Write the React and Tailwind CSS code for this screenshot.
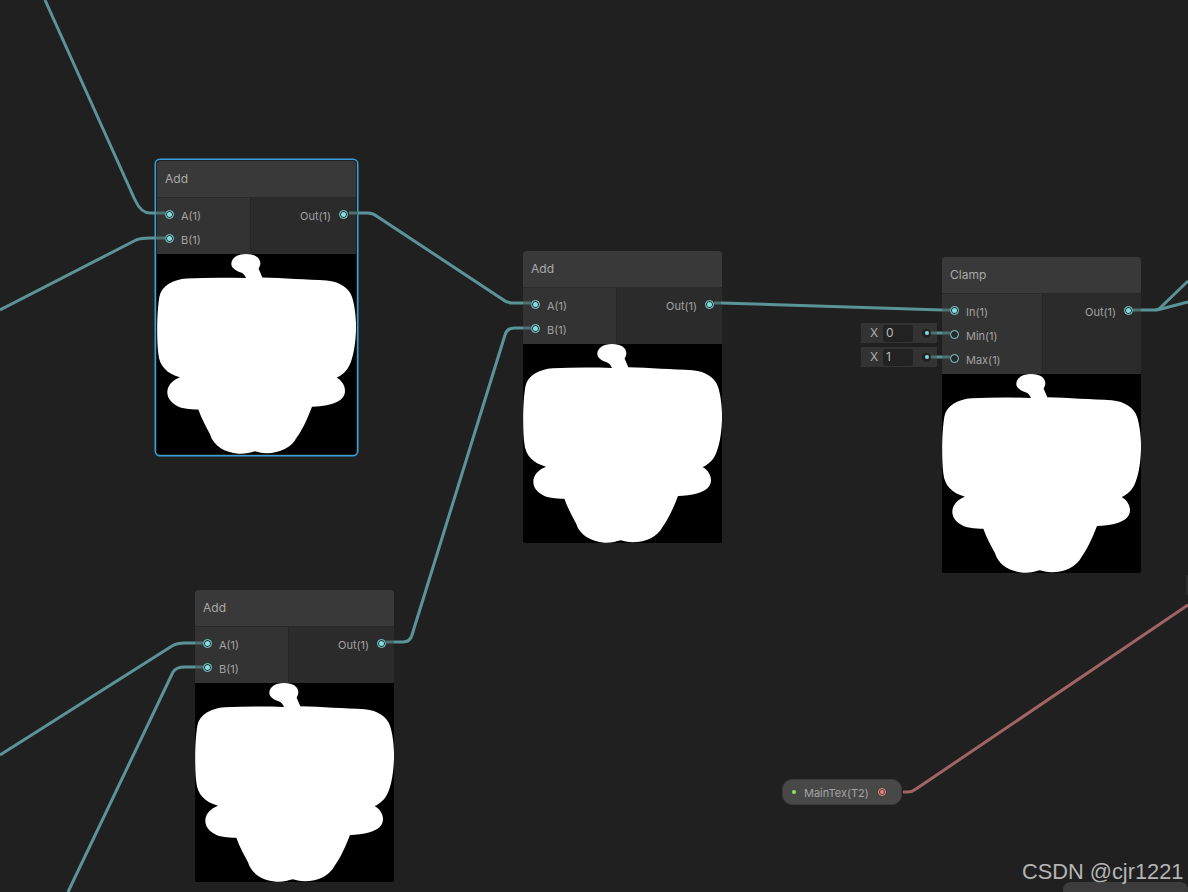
// App.jsx

const font = { fontFamily: 'Inter, "Noto Sans", sans-serif' };

function Silhouette() {
  return (
    <svg viewBox="21 12 597 597" preserveAspectRatio="none" className="block w-full h-full">
      <path
        fill="#fff"
        d="M288 12 C316 12 332 24 331 42 C330 50 326 54 326 56 L337 82 C400 84 470 88 530 91 C570 94 598 115 606 140 C616 170 619 215 618 240 C616 285 610 320 598 345 C590 362 575 375 560 381 C575 390 585 405 585 420 C585 440 570 452 545 460 C525 466 505 468 486 468 C470 510 455 540 440 560 C425 590 390 606 350 607 C335 607 322 603 314 601 C300 605 285 609 265 608 C225 605 190 585 180 550 C170 530 155 505 145 476 C120 476 90 474 75 462 C60 452 52 440 52 425 C52 405 68 388 90 380 C50 370 28 345 25 310 C20 270 20 190 28 140 C35 105 70 88 110 85 C170 82 230 82 288 84 C285 76 280 70 275 68 C255 62 244 52 244 42 C244 24 262 12 288 12 Z"
      />
    </svg>
  );
}

function Dot({ empty }) {
  return (
    <span className="relative z-20 flex items-center justify-center w-[9px] h-[9px] rounded-full border border-[#7fdde0] bg-[#262626] shrink-0">
      {!empty && <span className="w-[5px] h-[5px] rounded-full bg-[#7fdde0]" />}
    </span>
  );
}

function Port({ label, empty, right }) {
  return (
    <div className={`flex items-center h-6 ${right ? 'justify-end gap-[8px]' : 'gap-[7px]'}`}>
      {right ? null : <Dot empty={empty} />}
      <span className="text-[11px] leading-none pt-[4px] text-[#a2a2a2]">{label}</span>
      {right ? <Dot empty={empty} /> : null}
    </div>
  );
}

function Node({ title, inputs, className, leftWidth, bodyHeight }) {
  return (
    <div className={`absolute flex flex-col rounded-[3px] bg-black overflow-hidden ${className}`}>
      <div className="flex items-center h-[37px] pl-[8px] bg-[#393939] border-b border-[#2a2a2a] text-[12px] text-[#aaaaaa] shrink-0">
        {title}
      </div>
      <div className={`flex shrink-0 ${bodyHeight}`}>
        <div className={`bg-[#333333] border-r border-[#262626] pl-[8px] pt-1 ${leftWidth}`}>
          {inputs.map((p) => (
            <Port key={p.label} label={p.label} empty={p.empty} />
          ))}
        </div>
        <div className="flex-1 bg-[#2b2b2b] pr-[8px] pt-1">
          <Port label="Out(1)" right />
        </div>
      </div>
      <div className="flex-1 min-h-0 bg-black">
        <Silhouette />
      </div>
    </div>
  );
}

function ValueField({ value }) {
  return (
    <div className="flex items-center w-[76px] h-5 bg-[#333333] text-[12px] text-[#aaaaaa]">
      <span className="w-[22px] pl-[9px]">X</span>
      <span className="flex items-center w-[30px] h-[17px] pl-[3px] rounded-[3px] bg-[#222222] text-[#bbbbbb]">{value}</span>
      <span className="relative z-20 ml-[9px] flex items-center justify-center w-[9px] h-[9px] rounded-full bg-[#222222]">
        <span className="w-[4px] h-[4px] rounded-full bg-[#7fdde0]" />
      </span>
    </div>
  );
}

function Wires() {
  return (
    <svg width="1188" height="892" className="absolute left-0 top-0 z-10 pointer-events-none" fill="none">
      <g stroke="#5b9498" strokeWidth="3">
        <path d="M45 0 L135 200 Q141 213 150 213 L156 213" />
        <path d="M0 310 L136 240 Q141 238 150 238 L156 238" />
        <path d="M358 213 L368 213 Q373 213 378 217 L502 299 Q507 303 512 303 L523 303" />
        <path d="M394 642 L403 642 Q410 642 412 635 L505 335 Q507 328 514 328 L523 328" />
        <path d="M721 303 L942 310" />
        <path d="M0 755 L172 646 Q177 643 185 643 L195 643" />
        <path d="M68 892 L173 672 Q176 667 185 667 L195 667" />
        <path d="M1141 310 L1155 310 Q1158 310 1160 308 L1188 281" />
        <path d="M1155 310 Q1158 310 1161 309 L1188 302" />
        <path d="M937 333 L942 333" />
        <path d="M937 357 L942 357" />
      </g>
      <g stroke="#4d7274" strokeWidth="3">
        <path d="M156 213 L165 213" />
        <path d="M156 238 L165 238" />
        <path d="M349 213 L358 213" />
        <path d="M523 303 L531 303" />
        <path d="M523 328 L531 328" />
        <path d="M714 303 L721 303" />
        <path d="M195 643 L203 643" />
        <path d="M195 667 L203 667" />
        <path d="M386 642 L394 642" />
        <path d="M942 310 L950 310" />
        <path d="M1133 310 L1141 310" />
        <path d="M930 333 L937 333" />
        <path d="M942 333 L950 333" />
        <path d="M930 357 L937 357" />
        <path d="M942 357 L950 357" />
      </g>
      <path d="M903 792 L908 792 Q912 792 916 789 L1188 605" stroke="#a06464" strokeWidth="3" />
    </svg>
  );
}

export default function App() {
  return (
    <div className="relative w-[1188px] h-[892px] overflow-hidden bg-[#202020]" style={font}>
      <Node
        title="Add"
        inputs={[{ label: 'A(1)' }, { label: 'B(1)' }]}
        className="left-[157px] top-[161px] w-[199px] h-[293px] ring-[1.5px] ring-[#3a9fd8] ring-offset-1 ring-offset-[#1f1f1f]"
        leftWidth="w-[94px]"
        bodyHeight="h-[56px]"
      />
      <Node
        title="Add"
        inputs={[{ label: 'A(1)' }, { label: 'B(1)' }]}
        className="left-[523px] top-[251px] w-[199px] h-[292px]"
        leftWidth="w-[94px]"
        bodyHeight="h-[56px]"
      />
      <Node
        title="Clamp"
        inputs={[{ label: 'In(1)' }, { label: 'Min(1)', empty: true }, { label: 'Max(1)', empty: true }]}
        className="left-[942px] top-[257px] w-[199px] h-[316px]"
        leftWidth="w-[101px]"
        bodyHeight="h-[80px]"
      />
      <Node
        title="Add"
        inputs={[{ label: 'A(1)' }, { label: 'B(1)' }]}
        className="left-[195px] top-[590px] w-[199px] h-[292px]"
        leftWidth="w-[94px]"
        bodyHeight="h-[56px]"
      />

      <div className="absolute left-[861px] top-[323px] flex flex-col gap-1">
        <ValueField value="0" />
        <ValueField value="1" />
      </div>

      <Wires />

      <div className="absolute left-[782px] top-[779px] flex items-center w-[120px] h-[26px] rounded-[10px] bg-[#484848] border border-[#3a3a3a] pl-[9px] text-[11px] text-[#a4a4a4]">
        <span className="w-[4px] h-[4px] rounded-full bg-[#8fe860]" />
        <span className="ml-[8px] pt-[3px]">MainTex(T2)</span>
        <span className="ml-[9px] flex items-center justify-center w-[8px] h-[8px] rounded-full border border-[#f08080]">
          <span className="w-[4px] h-[4px] rounded-full bg-[#f08080]" />
        </span>
      </div>

      <div className="absolute right-0 top-[575px] w-[2px] h-[20px] bg-[#2e2e2e]" />
      <div className="absolute left-[1063px] top-[882px] w-[125px] h-[10px] rounded-t-[8px] bg-[#3c3c3c]" />

      <div className="absolute left-[1022px] top-[858px] text-[21.8px] leading-[28px] text-[#b4b4b4] font-['Liberation_Sans',sans-serif]">
        CSDN @cjr1221
      </div>
    </div>
  );
}
